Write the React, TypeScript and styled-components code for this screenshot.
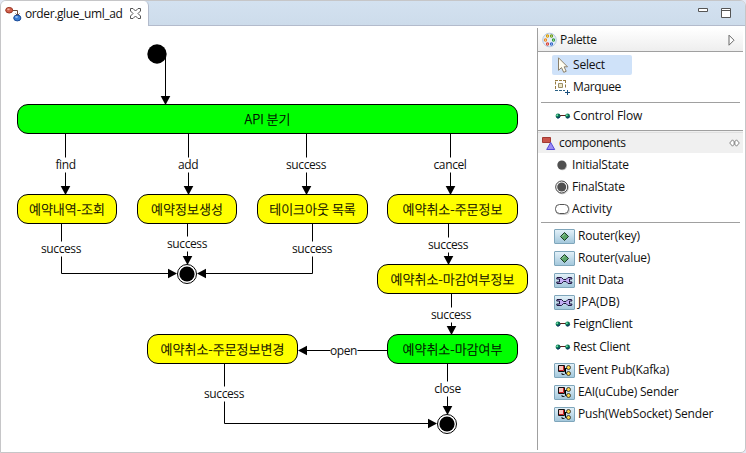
import React from "react";
import styled, { createGlobalStyle } from "styled-components";

const GlobalStyle = createGlobalStyle`
  * { box-sizing: border-box; }
  body {
    margin: 0;
    background: #e4e9f5;
    color: #111;
    font: 12px/16px "Open Sans", "Noto Sans CJK KR", sans-serif;
  }
  svg { flex: none; }
`;

const Frame = styled.div`
  width: 746px;
  height: 453px;
  display: flex;
  flex-direction: column;
  background: #fff;
  border: 1px solid #c6c6c8;
  border-radius: 6px 6px 5px 0;
  overflow: hidden;
`;

const TabBar = styled.header`
  height: 25px;
  flex: none;
  display: flex;
  background: #cfdeed;
`;

const Tab = styled.div`
  width: 148px;
  display: flex;
  align-items: center;
  padding: 0 0 0 4px;
  background: #fff;
  border-right: 1px solid #b3bbcc;
  border-top-right-radius: 5px;
`;

const TabTitle = styled.span`
  width: 105px;
  margin-left: 3px;
  white-space: nowrap;
  letter-spacing: -0.38px;
`;

const TabFill = styled.div`
  flex: 1;
  display: flex;
  justify-content: flex-end;
  gap: 13px;
  padding: 6px 14px 0 0;
  background: linear-gradient(#d3e1f0, #cddceb);
  border-bottom: 1px solid #b3bbcc;
  border-top-right-radius: 5px;
`;

const Body = styled.div`
  flex: 1;
  display: flex;
  padding: 2px 2px 2px 0;
`;

const Canvas = styled.main`
  position: relative;
  flex: 1;
`;

const Edges = styled.svg`
  position: absolute;
  left: -1px;
  top: -28px;
`;

const Node = styled.div<{ $x: number; $y: number; $w: number; $fill: string }>`
  position: absolute;
  left: ${(p) => p.$x - 1}px;
  top: ${(p) => p.$y - 28}px;
  width: ${(p) => p.$w}px;
  height: 30px;
  display: flex;
  align-items: center;
  justify-content: center;
  background: ${(p) => p.$fill};
  border: 1px solid #000;
  border-radius: 11px;
  color: #000;
  font: 300 13px/16px "Noto Sans CJK KR", sans-serif;
  -webkit-text-stroke: 0.25px #000;
  white-space: nowrap;
`;

const EdgeLabel = styled.span<{ $x: number; $y: number }>`
  position: absolute;
  left: ${(p) => p.$x - 1}px;
  top: ${(p) => p.$y - 28}px;
  height: 15px;
  line-height: 14px;
  background: #fff;
  transform: translate(-50%, -50%);
  letter-spacing: -0.38px;
`;

const Palette = styled.aside`
  width: 206px;
  height: 422px;
  border-left: 1px solid #a0a0a0;
  display: flex;
  flex-direction: column;
`;

const PaletteHeader = styled.div`
  height: 24px;
  display: flex;
  align-items: center;
  padding: 0 8px 0 4px;
  background: linear-gradient(#fff, #eeeeee);
  border-bottom: 1px solid #a0a0a0;
`;

const Title = styled.span`
  flex: 1;
  margin-left: 3px;
  letter-spacing: -0.34px;
`;

const DrawerHeader = styled.div`
  height: 23px;
  display: flex;
  align-items: center;
  padding: 2px 3px 0 4px;
  margin-bottom: 1px;
  background: linear-gradient(#e0e0e0, #e0e0e0) 0 1px / 100% 1px no-repeat, #f0f0f0;
  border-top: 1px solid #a0a0a0;
`;

const Group = styled.div<{ $top: number; $bottom: number }>`
  display: flex;
  flex-direction: column;
  padding: ${(p) => p.$top}px 0 ${(p) => p.$bottom}px 14px;
`;

const Tool = styled.div<{ $selected?: boolean; $h?: number; $wide?: boolean; $track?: number }>`
  width: ${(p) => (p.$selected ? "80px" : "auto")};
  height: ${(p) => p.$h ?? 22}px;
  display: flex;
  align-items: center;
  gap: ${(p) => (p.$wide ? 3 : 2)}px;
  padding-left: ${(p) => (p.$wide ? 2 : 3)}px;
  background: ${(p) => (p.$selected ? "#cfe2f9" : "transparent")};
  border-radius: 2px;
  white-space: nowrap;
  letter-spacing: ${(p) => p.$track ?? -0.2}px;
`;

const Separator = styled.hr`
  width: 199px;
  height: 1px;
  margin: 0 0 0 3px;
  border: 0;
  background: #a0a0a0;
`;

const Chip = styled.span`
  width: 21px;
  height: 15px;
  flex: none;
  display: flex;
  align-items: center;
  justify-content: center;
  border: 1px solid #7fa6bb;
  border-radius: 1px;
  background: linear-gradient(#e2f0f8, #a4c8dc);
`;

const FileIcon = () => (
  <svg width="17" height="16" viewBox="0 0 17 16">
    <path d="M8 4.5h4.5V9M10.5 7.5l2 2 2-2" fill="none" stroke="#6b4a3a" />
    <ellipse cx="4.2" cy="4.2" rx="3.5" ry="2.8" fill="#d0604c" stroke="#9b3421" />
    <ellipse cx="3.4" cy="3.4" rx="1.3" ry=".8" fill="#f4b09f" />
    <ellipse cx="12.3" cy="12" rx="3.6" ry="2.9" fill="#3b7ed4" stroke="#1c4c98" />
    <ellipse cx="11.5" cy="11" rx="1.5" ry=".8" fill="#b2d6fa" />
  </svg>
);

const CloseIcon = () => (
  <svg width="11" height="11" viewBox="0 0 11 11">
    <path
      d="M.5.5h2.500L5.500 3 8 .5h2.500V3L8 5.500 10.500 8v2.500H8L5.500 8 3 10.500H.5V8L3 5.500.5 3z"
      fill="#fff"
      stroke="#555"
    />
  </svg>
);

const MinimizeIcon = () => (
  <svg width="10" height="12" viewBox="0 0 10 12">
    <path d="M.5 1.500h9v3h-9z" fill="#fff" stroke="#555" />
  </svg>
);

const MaximizeIcon = () => (
  <svg width="10" height="12" viewBox="0 0 10 12">
    <path d="M.5 1.500h9v9h-9zM0 3.500h10" fill="#fff" stroke="#555" />
  </svg>
);

const PaletteIcon = () => (
  <svg width="15" height="16" viewBox="0 0 15 16">
    <circle cx="7.5" cy="8" r="6.8" fill="#e3edf9" stroke="#b5c8df" />
    <g fill="#fff" strokeWidth="1.1">
      <circle cx="5.5" cy="4" r="1.1" stroke="#d79a00" />
      <circle cx="9.5" cy="4" r="1.1" stroke="#6c9a10" />
      <circle cx="3.5" cy="8" r="1.1" stroke="#ef8a1d" />
      <circle cx="11.5" cy="8" r="1.1" stroke="#2f9a35" />
      <circle cx="5.5" cy="12" r="1.1" stroke="#db4033" />
      <circle cx="9.5" cy="12" r="1.1" stroke="#2e62c8" />
    </g>
  </svg>
);

const ExpandIcon = () => (
  <svg width="7" height="12" viewBox="0 0 7 12">
    <path d="M1 1.200l5 5-5 5z" fill="#fff" stroke="#666" />
  </svg>
);

const CursorIcon = () => (
  <svg width="16" height="16" viewBox="0 0 16 16">
    <path d="M3.500.8v12.500l3-2.700 2.200 4.700 2.500-1-2.100-4.500h3.400z" fill="#fffdf0" stroke="#8b806b" />
  </svg>
);

const MarqueeIcon = () => (
  <svg width="16" height="16" viewBox="0 0 16 16">
    <path d="M.5 10V1M10.500 1v8" fill="none" stroke="#967a3e" strokeDasharray="3 1.500" />
    <path d="M0 1.500h11" stroke="#967a3e" strokeDasharray="3 1" />
    <path d="M0 11.500h10" stroke="#2b6285" strokeDasharray="3 1" />
    <path d="M3.500 4.500h4v4h-4z" fill="#eee7c8" stroke="#9c8e66" />
    <path d="M12.500 11v5M10 13.500h5" stroke="#174d7c" />
  </svg>
);

const FlowIcon = () => (
  <svg width="16" height="16" viewBox="0 0 16 16">
    <path d="M4 7.500h8" stroke="#5b1b1b" />
    {[3, 12.6].map((x) => (
      <g key={x}>
        <circle cx={x} cy="8" r="2.400" fill="#087050" />
        <path d={`M${x - 1} 9.900h2l1.200-1.600`} fill="none" stroke="#152a6c" />
        <circle cx={x - 0.8} cy="7.200" r="1" fill="#6fe0a8" />
      </g>
    ))}
  </svg>
);

const ComponentsIcon = () => (
  <svg width="14" height="15" viewBox="0 0 14 15">
    <path d="M.5 1.500h8v5h-8z" fill="#c9544a" stroke="#a33a33" />
    <path d="M8.700 6.500l4 7h-8z" fill="#9a8cf5" stroke="#5548d8" />
  </svg>
);

const PinIcon = () => (
  <svg width="11" height="8" viewBox="0 0 11 8">
    <path
      d="M3.500.8L.7 4l2.800 3.200L6.300 4zM7.500.8L4.700 4l2.800 3.200L10.300 4z"
      fill="#fff"
      stroke="#777"
      strokeWidth=".9"
    />
  </svg>
);

const InitialIcon = () => (
  <svg width="15" height="16" viewBox="0 0 15 16">
    <circle cx="7.500" cy="8.800" r="4.500" fill="#bbb" />
    <circle cx="6.800" cy="8" r="4.500" fill="#505050" />
  </svg>
);

const FinalIcon = () => (
  <svg width="15" height="16" viewBox="0 0 15 16">
    <circle cx="7.300" cy="8.800" r="6" fill="none" stroke="#bbb" />
    <circle cx="6.700" cy="8" r="6" fill="#fff" stroke="#444" />
    <circle cx="6.700" cy="8" r="4.500" fill="#505050" />
  </svg>
);

const ActivityIcon = () => (
  <svg width="15" height="16" viewBox="0 0 15 16">
    <rect x="1" y="4.500" width="13.500" height="9" rx="4" fill="none" stroke="#ccc" />
    <rect x=".5" y="3.500" width="13" height="9" rx="4" fill="#fff" stroke="#555" />
  </svg>
);

const RouterIcon = () => (
  <Chip>
    <svg width="11" height="11" viewBox="0 0 11 11">
      <path d="M5.500 1.500L9.500 5.500 5.500 9.500 1.500 5.500z" fill="#5aa468" stroke="#1b3b25" />
      <path d="M5.500 3l-2.500 2.500" stroke="#a8dcb0" />
    </svg>
  </Chip>
);

const WrenchIcon = () => (
  <Chip>
    <svg width="17" height="9" viewBox="0 0 17 9">
      <path
        d="M1 1.500h4.500L7.500 3.500H10l2-2h3.500L16 3h-2.500v3H16l-.5 1.500H12l-2-2H7.500l-2 2H1L.7 6H3.500V3H.7z"
        fill="#c3aef5"
        stroke="#1d173e"
      />
    </svg>
  </Chip>
);

const EventIcon = () => (
  <Chip>
    <svg width="15" height="13" viewBox="0 0 15 13">
      <path d="M7 4.500h3M8.500 4.500v5H11" fill="none" stroke="#000" />
      <path d="M1.500 1.500h6v6h-6z" fill="#fbc4be" stroke="#111" />
      <path d="M2 6.500h4.500V2" fill="none" stroke="#d02020" />
      <circle cx="11.500" cy="3.500" r="2" fill="#fbd548" stroke="#222" strokeWidth=".8" />
      <circle cx="11.500" cy="9.500" r="2" fill="#fbd548" stroke="#222" strokeWidth=".8" />
      <path d="M5 9v1.500h2.500" fill="none" stroke="#222" />
    </svg>
  </Chip>
);

const YELLOW = "#ffff00";
const GREEN = "#00ff00";

const nodes = [
  { x: 17, y: 104, w: 501, fill: GREEN, text: "API 분기" },
  { x: 17, y: 194, w: 100, fill: YELLOW, text: "예약내역-조회" },
  { x: 137, y: 194, w: 100, fill: YELLOW, text: "예약정보생성" },
  { x: 257, y: 194, w: 111, fill: YELLOW, text: "테이크아웃 목록" },
  { x: 387, y: 194, w: 131, fill: YELLOW, text: "예약취소-주문정보" },
  { x: 377, y: 264, w: 151, fill: YELLOW, text: "예약취소-마감여부정보" },
  { x: 147, y: 334, w: 151, fill: YELLOW, text: "예약취소-주문정보변경" },
  { x: 387, y: 334, w: 131, fill: GREEN, text: "예약취소-마감여부" },
];

const labels = [
  { x: 65.5, y: 164.5, text: "find" },
  { x: 188, y: 164.5, text: "add" },
  { x: 306, y: 164.5, text: "success" },
  { x: 450, y: 164.5, text: "cancel" },
  { x: 61, y: 248.5, text: "success" },
  { x: 187, y: 243.5, text: "success" },
  { x: 312, y: 248.5, text: "success" },
  { x: 448, y: 244.5, text: "success" },
  { x: 451, y: 314.5, text: "success" },
  { x: 343.5, y: 350.5, text: "open" },
  { x: 224, y: 393.5, text: "success" },
  { x: 447.5, y: 388.5, text: "close" },
];

const lines = [
  "M165.500 56V100",
  "M65.500 134V190",
  "M188.500 134V190",
  "M306.500 134V190",
  "M450.500 134V190",
  "M61.500 224V273.500H170",
  "M187.500 224V258",
  "M312.500 224V273.500H204",
  "M448.500 224V260",
  "M451.500 294V330",
  "M387 350.500H304",
  "M224.500 364V423.500H430",
  "M447.500 364V408",
];

const downHeads: [number, number][] = [
  [165.5, 104],
  [65.5, 194],
  [188.5, 194],
  [306.5, 194],
  [450.5, 194],
  [187.5, 264],
  [448.5, 264],
  [451.5, 334],
  [447.5, 414],
];

const sideHeads: [number, number, number][] = [
  [177, 273.5, -9],
  [197, 273.5, 9],
  [298, 350.5, 9],
  [437, 423.5, -9],
];

const groups = {
  components: [
    { icon: InitialIcon, text: "InitialState" },
    { icon: FinalIcon, text: "FinalState" },
    { icon: ActivityIcon, text: "Activity", track: 0 },
  ],
  services: [
    { icon: RouterIcon, text: "Router(key)", wide: true },
    { icon: RouterIcon, text: "Router(value)", wide: true },
    { icon: WrenchIcon, text: "Init Data", wide: true },
    { icon: WrenchIcon, text: "JPA(DB)", wide: true, track: 0 },
    { icon: FlowIcon, text: "FeignClient", h: 22 },
    { icon: FlowIcon, text: "Rest Client", h: 24 },
    { icon: EventIcon, text: "Event Pub(Kafka)", wide: true },
    { icon: EventIcon, text: "EAI(uCube) Sender", wide: true },
    { icon: EventIcon, text: "Push(WebSocket) Sender", wide: true },
  ],
};

export default function App() {
  return (
    <>
      <GlobalStyle />
      <Frame>
        <TabBar>
          <Tab>
            <FileIcon />
            <TabTitle>order.glue_uml_ad</TabTitle>
            <CloseIcon />
          </Tab>
          <TabFill>
            <MinimizeIcon />
            <MaximizeIcon />
          </TabFill>
        </TabBar>
        <Body>
          <Canvas>
            <Edges width="537" height="450" viewBox="0 0 537 450">
              {lines.map((d) => (
                <path key={d} d={d} fill="none" stroke="#000" />
              ))}
              {downHeads.map(([x, y]) => (
                <path key={`${x}-${y}`} d={`M${x - 4.8} ${y - 8}h9.600L${x} ${y + 1}z`} />
              ))}
              {sideHeads.map(([x, y, d]) => (
                <path key={`${x}-${y}`} d={`M${x} ${y}l${d} -4.800v9.600z`} />
              ))}
              <circle cx="157" cy="54" r="9.700" />
              {[
                [187, 274],
                [447, 424],
              ].map(([x, y]) => (
                <g key={x}>
                  <circle cx={x} cy={y} r="9.500" fill="#fff" stroke="#000" />
                  <circle cx={x} cy={y} r="7.600" />
                </g>
              ))}
            </Edges>
            {nodes.map((n) => (
              <Node key={n.text} $x={n.x} $y={n.y} $w={n.w} $fill={n.fill}>
                {n.text}
              </Node>
            ))}
            {labels.map((l) => (
              <EdgeLabel key={`${l.x}-${l.y}`} $x={l.x} $y={l.y}>
                {l.text}
              </EdgeLabel>
            ))}
          </Canvas>
          <Palette>
            <PaletteHeader>
              <PaletteIcon />
              <Title>Palette</Title>
              <ExpandIcon />
            </PaletteHeader>
            <Group $top={3} $bottom={4}>
              <Tool $selected $h={20}>
                <CursorIcon />
                Select
              </Tool>
              <Tool $h={23} $track={-0.38}>
                <MarqueeIcon />
                Marquee
              </Tool>
            </Group>
            <Separator />
            <Group $top={2} $bottom={3}>
              <Tool $track={-0.1}>
                <FlowIcon />
                Control Flow
              </Tool>
            </Group>
            <DrawerHeader>
              <ComponentsIcon />
              <Title>components</Title>
              <PinIcon />
            </DrawerHeader>
            <Group $top={0} $bottom={2}>
              {groups.components.map(({ icon: Icon, text, track }) => (
                <Tool key={text} $track={track}>
                  <Icon />
                  {text}
                </Tool>
              ))}
            </Group>
            <Separator />
            <Group $top={2} $bottom={0}>
              {groups.services.map(({ icon: Icon, text, wide, h, track }) => (
                <Tool key={text} $wide={wide} $h={h} $track={track}>
                  <Icon />
                  {text}
                </Tool>
              ))}
            </Group>
          </Palette>
        </Body>
      </Frame>
    </>
  );
}
